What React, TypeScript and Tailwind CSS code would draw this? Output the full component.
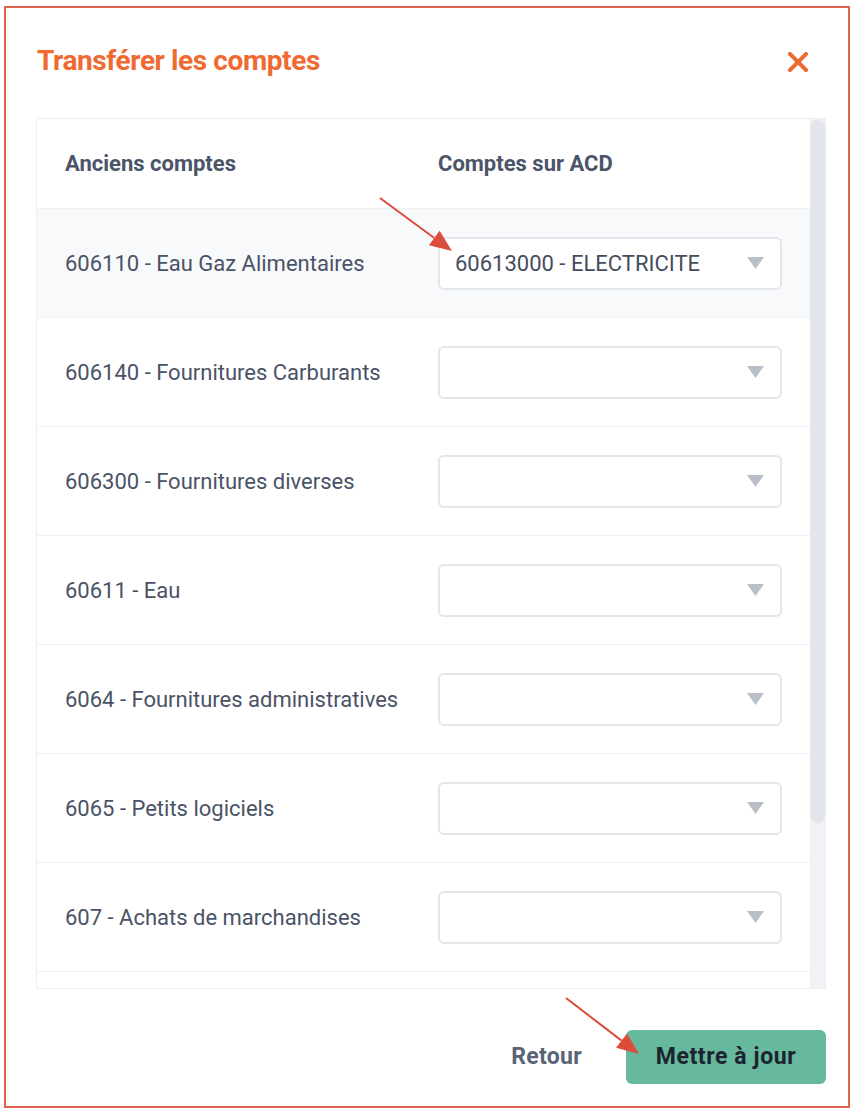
import React from 'react'

const rows = [
  { name: '606110 - Eau Gaz Alimentaires', value: '60613000 - ELECTRICITE', active: true },
  { name: '606140 - Fournitures Carburants', value: '' },
  { name: '606300 - Fournitures diverses', value: '' },
  { name: '60611 - Eau', value: '' },
  { name: '6064 - Fournitures administratives', value: '' },
  { name: '6065 - Petits logiciels', value: '' },
  { name: '607 - Achats de marchandises', value: '' },
]

function Arrow({ x1, y1, x2, y2 }: { x1: number; y1: number; x2: number; y2: number }) {
  const ang = Math.atan2(y2 - y1, x2 - x1)
  const len = 22
  const w = 9
  const bx = x2 - Math.cos(ang) * len
  const by = y2 - Math.sin(ang) * len
  const px = -Math.sin(ang) * w
  const py = Math.cos(ang) * w
  return (
    <g>
      <line x1={x1} y1={y1} x2={bx} y2={by} stroke="#dc4c3a" strokeWidth="2" />
      <polygon points={`${x2},${y2} ${bx + px},${by + py} ${bx - px},${by - py}`} fill="#dc4c3a" />
    </g>
  )
}

function Select({ value }: { value: string }) {
  return (
    <div className="flex h-[53px] w-[344px] items-center justify-between rounded-[6px] border-2 border-[#e2e5ea] bg-white pl-[15px] pr-[16px]">
      <span className="text-[22px] text-[#454d5d]">{value}</span>
      <svg width="17" height="12" viewBox="0 0 17 12">
        <polygon points="0,0 17,0 8.5,12" fill="#b9bfc8" />
      </svg>
    </div>
  )
}

export default function App() {
  return (
    <div className="relative h-[1114px] w-[856px] bg-white pl-[4px] pt-[6px] font-['Roboto',sans-serif]">
      <div className="flex h-[1102px] w-[846px] flex-col border-2 border-[#e0634f] bg-white">
        <div className="flex items-start justify-between pl-[31px] pr-[40px] pt-[35px]">
          <h1 className="text-[28px] font-bold leading-[36px] tracking-[-0.4px] text-[#ef6a31]">Transférer les comptes</h1>
          <svg width="20" height="20" viewBox="0 0 20 20" className="mt-[9px]">
            <path d="M2 2 L18 18 M18 2 L2 18" stroke="#ef6a31" strokeWidth="4" strokeLinecap="square" />
          </svg>
        </div>

        <div className="ml-[30px] mt-[39px] flex h-[871px] w-[790px] border border-[#eceef2]">
          <div className="flex-1 overflow-hidden">
            <div className="flex h-[90px] items-center border-b border-[#eef0f3] pl-[28px]">
              <div className="w-[373px] text-[22px] font-bold text-[#4b5567]">Anciens comptes</div>
              <div className="text-[22px] font-bold text-[#4b5567]">Comptes sur ACD</div>
            </div>
            {rows.map((r) => (
              <div
                key={r.name}
                className={`flex h-[109px] shrink-0 items-center border-b border-[#eef0f3] pl-[28px] ${r.active ? 'bg-[#f8f9fb]' : 'bg-white'}`}
              >
                <div className="w-[373px] text-[22px] text-[#4a5366]">{r.name}</div>
                <Select value={r.value} />
              </div>
            ))}
            <div className="h-[109px] bg-white" />
          </div>
          <div className="w-[15px] bg-[#f1f2f5] pt-[1px]">
            <div className="h-[703px] rounded-full bg-[#e2e5ea]" />
          </div>
        </div>

        <div className="mt-[41px] flex items-center justify-end gap-[44px] pr-[22px]">
          <button className="text-[23px] font-bold tracking-[0.3px] text-[#5a6478]">Retour</button>
          <button className="flex h-[54px] w-[200px] items-center justify-center rounded-[6px] bg-[#66b99d] text-[23px] font-bold tracking-[0.6px] text-[#1d2330]">
            Mettre à jour
          </button>
        </div>
      </div>

      <svg className="pointer-events-none absolute left-0 top-0" width="856" height="1114">
        <Arrow x1={380} y1={198} x2={452} y2={251} />
        <Arrow x1={566} y1={998} x2={639} y2={1054} />
      </svg>
    </div>
  )
}
